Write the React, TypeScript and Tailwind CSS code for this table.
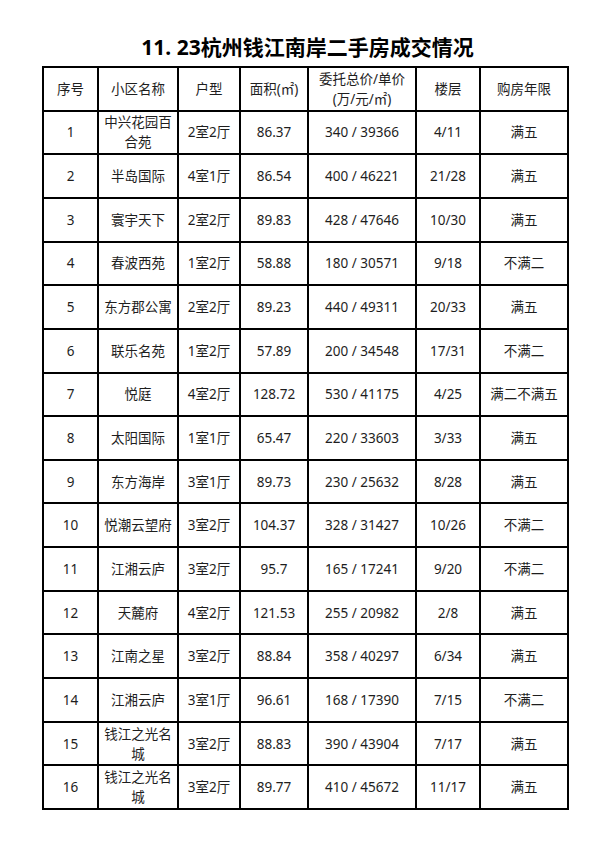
import React from "react";

const rows: string[][] = [
  ["1", "中兴花园百合苑", "2室2厅", "86.37", "340 / 39366", "4/11", "满五"],
  ["2", "半岛国际", "4室1厅", "86.54", "400 / 46221", "21/28", "满五"],
  ["3", "寰宇天下", "2室2厅", "89.83", "428 / 47646", "10/30", "满五"],
  ["4", "春波西苑", "1室2厅", "58.88", "180 / 30571", "9/18", "不满二"],
  ["5", "东方郡公寓", "2室2厅", "89.23", "440 / 49311", "20/33", "满五"],
  ["6", "联乐名苑", "1室2厅", "57.89", "200 / 34548", "17/31", "不满二"],
  ["7", "悦庭", "4室2厅", "128.72", "530 / 41175", "4/25", "满二不满五"],
  ["8", "太阳国际", "1室1厅", "65.47", "220 / 33603", "3/33", "满五"],
  ["9", "东方海岸", "3室1厅", "89.73", "230 / 25632", "8/28", "满五"],
  ["10", "悦潮云望府", "3室2厅", "104.37", "328 / 31427", "10/26", "不满二"],
  ["11", "江湘云庐", "3室2厅", "95.7", "165 / 17241", "9/20", "不满二"],
  ["12", "天麓府", "4室2厅", "121.53", "255 / 20982", "2/8", "满五"],
  ["13", "江南之星", "3室2厅", "88.84", "358 / 40297", "6/34", "满五"],
  ["14", "江湘云庐", "3室1厅", "96.61", "168 / 17390", "7/15", "不满二"],
  ["15", "钱江之光名城", "3室2厅", "88.83", "390 / 43904", "7/17", "满五"],
  ["16", "钱江之光名城", "3室2厅", "89.77", "410 / 45672", "11/17", "满五"],
];

const header: React.ReactNode[] = [
  "序号",
  "小区名称",
  "户型",
  "面积(㎡)",
  (
    <>
      委托总价/单价
      <br />
      (万/元/㎡)
    </>
  ),
  "楼层",
  "购房年限",
];

function Cell({ children }: { children: React.ReactNode }) {
  return (
    <div className="bg-white flex items-center justify-center text-center px-[4px] leading-[20px]">
      <span>{children}</span>
    </div>
  );
}

export default function App() {
  return (
    <div
      className="w-[615px] h-[865px] bg-white text-[#1e1e1e]"
      style={{ fontFamily: '"Noto Sans", "Noto Sans CJK SC", sans-serif' }}
    >
      <div className="pt-[33px] h-[61px] text-center text-[21px] leading-[28px] font-bold text-black">
        11. 23杭州钱江南岸二手房成交情况
      </div>
      <div className="mt-[5px] ml-[42px] w-[527px] h-[744px] bg-black p-[2px] gap-[2px] grid grid-cols-[53px_78px_60px_66px_106px_62px_86px] grid-rows-[repeat(17,1fr)] text-[13.5px]">
        {header.map((h, i) => (
          <Cell key={"h" + i}>{h}</Cell>
        ))}
        {rows.map((r, ri) =>
          r.map((c, ci) => <Cell key={ri + "-" + ci}>{c}</Cell>)
        )}
      </div>
    </div>
  );
}
